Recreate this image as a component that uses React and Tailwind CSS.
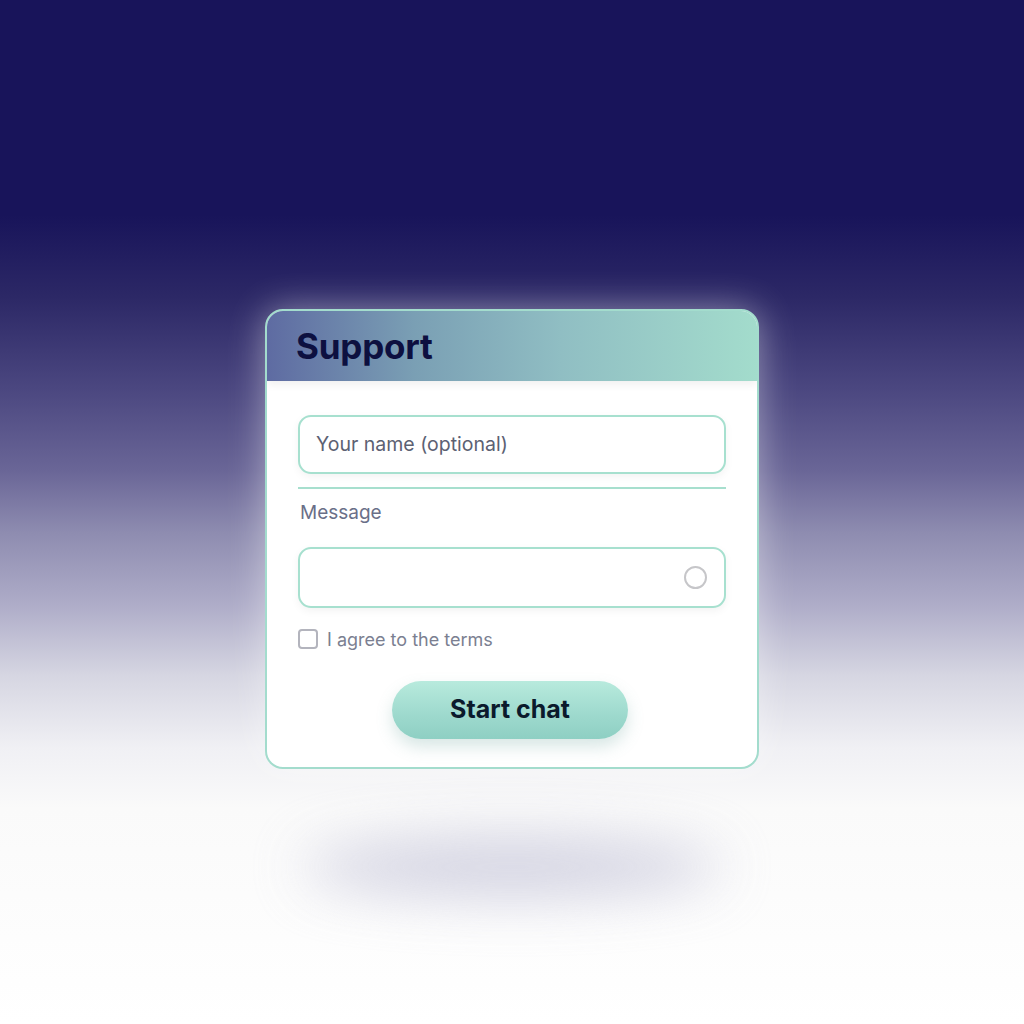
import React from 'react';

const App = () => {
  return (
    <div
      className="w-[1024px] h-[1024px] flex flex-col items-center overflow-hidden bg-[linear-gradient(180deg,#18145a_0%,#18145a_21%,#2c2866_29%,#4b4780_38%,#6a6697_46%,#8e8cb0_52%,#aeacc8_59%,#d6d6e2_66%,#f0f0f4_73%,#fafafa_79%,#ffffff_100%)]"
      style={{ fontFamily: 'Inter, "Noto Sans", sans-serif' }}
    >
      <div className="mt-[309px] w-[494px] h-[460px] rounded-[18px] border-2 border-[#a3dccd] bg-white overflow-hidden flex flex-col shadow-[0_0_36px_rgba(255,255,255,0.45)]">
        <div className="h-[70px] shrink-0 flex items-center px-[29px] bg-[linear-gradient(90deg,#5e6ba2_0%,#7a9fb4_30%,#90bec3_60%,#a3dccc_100%)] shadow-[0_4px_8px_rgba(0,0,0,0.06)]">
          <h1 className="text-[35px] font-bold text-[#0d1040] tracking-[-0.2px] leading-none">Support</h1>
        </div>

        <div className="flex flex-col px-[31px] pt-[34px]">
          <div className="h-[59px] rounded-[13px] border-2 border-[#a7e0cf] flex items-center px-[16px] shadow-[0_3px_8px_rgba(0,0,0,0.05)]">
            <span className="text-[19.5px] text-[#5c6173]">Your name (optional)</span>
          </div>

          <div className="mt-[13px] h-[2px] bg-[#a7dfce]" />

          <span className="mt-[10px] ml-[2px] text-[19px] text-[#6a6f88]">Message</span>

          <div className="mt-[19px] h-[61px] rounded-[13px] border-2 border-[#a7e0cf] flex items-center justify-end pr-[17px] shadow-[0_3px_8px_rgba(0,0,0,0.05)]">
            <span className="w-[23px] h-[23px] rounded-full border-2 border-[#c6c6c9]" />
          </div>

          <div className="mt-[18px] flex items-center gap-[9px]">
            <span className="w-[20px] h-[20px] rounded-[4px] border-2 border-[#b3b4bd] bg-white" />
            <span className="text-[18px] text-[#7b7f91]">I agree to the terms</span>
          </div>

          <div className="mt-[28px] flex justify-center">
            <button className="-ml-[4px] w-[236px] h-[58px] rounded-full bg-[linear-gradient(180deg,#b8eadd_0%,#9dd9cd_60%,#8ecfc3_100%)] shadow-[0_8px_16px_rgba(100,160,150,0.25)] text-[25px] font-bold text-[#0b1a2c]">
              Start chat
            </button>
          </div>
        </div>
      </div>

      <div className="mt-[70px] w-[420px] h-[56px] rounded-[50%] bg-[#c4c4d8] blur-[28px] opacity-80" />
    </div>
  );
};

export default App;
